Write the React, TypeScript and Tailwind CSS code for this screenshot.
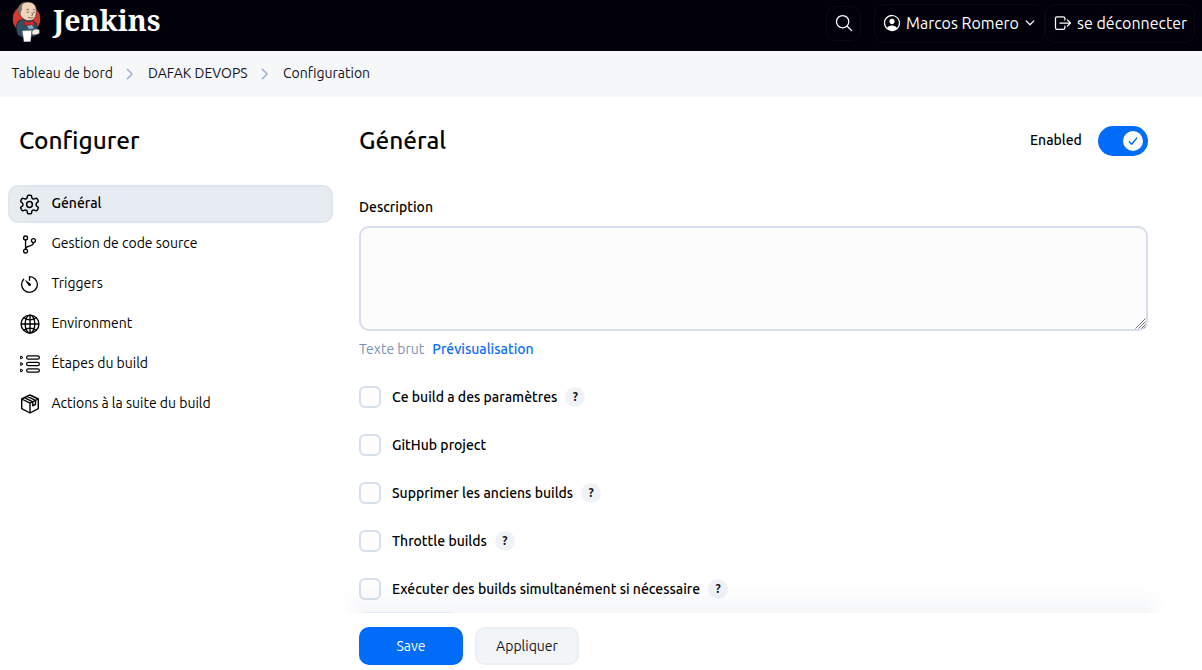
import { IoSearchOutline, IoPersonCircleOutline, IoLogOutOutline, IoGitBranchOutline, IoTimerOutline, IoGlobeOutline } from "react-icons/io5";
import type { ReactNode } from "react";

function Mascot() {
  return (
    <svg viewBox="0 0 30 42" className="h-[42px] w-[30px] shrink-0">
      <ellipse cx="14.500" cy="19" rx="13.800" ry="14" fill="#d33833" />
      <path d="M4 27 6 21.500l6-2.500 8 1 4.500 3.500 1 8-3 5-13 .500-4-2.500Z" fill="#335061" stroke="#14212b" strokeWidth=".8" />
      <path d="M6.500 12C5 6 9.500 2 15.500 2 21 2 24.500 5 24.300 10.500c.3 4.500-1 8-3.800 9.500-3.500 1.300-8.500.5-10.500-2.500-1-1-2.500-3-3.500-5.500Z" fill="#eed5b9" stroke="#3b302b" strokeWidth=".7" />
      <path d="M6.500 12C5.500 7 8.500 3.500 12.500 2.500c-2.500 2-3 4-2.500 7L8.800 12l.4 3.500Z" fill="#77716b" />
      <path d="m14.500 9.800 2.500-.6m4 .1 1.800.5m-8 2.500 2.300-.4m4 .4h1.800m-3 .3 1 2.300-1.600.6m-3.300 1.800c2 .8 3.300.8 4.800 0" stroke="#5a463c" strokeWidth=".8" fill="none" />
      <path d="m12 21 5 1.500 4.500-1.700.5 5.200-4.500-1.500-4.500 1.500Z" fill="#e3262c" stroke="#6d1718" strokeWidth=".5" />
      <path d="m15 26 5-1 2 3.500-5 .5Z" fill="#81b0c4" />
      <path d="M10.500 31 19.500 30.500l-1 11-6.500.3Z" fill="#fff" stroke="#b8bec6" strokeWidth=".4" />
      <path d="M20 31.500c1.500-3 5.500-3 7.500-1.500v3.500l-4 1.500-3.500-.5Z" fill="#f3ebe4" stroke="#3b302b" strokeWidth=".5" />
    </svg>
  );
}

function Gear() {
  return (
    <svg viewBox="0 0 24 24" className="mr-[1px] size-[21px] shrink-0" fill="none" stroke="currentColor" strokeWidth="1.700" strokeLinejoin="round">
      <path d="M9.600 2.500c.1-.7.700-1.200 1.400-1.200h2c.7 0 1.300.5 1.400 1.200l.3 1.700c.1.600.5 1 1 1.300.6.300 1.200.3 1.700.1l1.600-.6c.7-.3 1.400 0 1.800.6l1 1.800c.4.600.2 1.400-.3 1.800l-1.400 1.100c-.4.400-.6.900-.6 1.700s.2 1.300.6 1.700l1.400 1.100c.5.400.7 1.200.3 1.800l-1 1.800c-.4.600-1.100.9-1.800.6l-1.600-.6c-.5-.2-1.100-.2-1.700.1-.5.300-.9.700-1 1.300l-.3 1.700c-.1.700-.7 1.200-1.400 1.200h-2c-.7 0-1.300-.5-1.400-1.200l-.3-1.700c-.1-.6-.5-1-1-1.300-.6-.3-1.200-.3-1.700-.1l-1.600.6c-.7.300-1.400 0-1.800-.6l-1-1.800c-.4-.6-.2-1.400.3-1.800l1.400-1.100c.4-.4.600-.9.600-1.700s-.2-1.300-.6-1.700L2.500 9.200c-.5-.4-.7-1.200-.3-1.800l1-1.800c.4-.6 1.100-.9 1.800-.6l1.600.6c.5.200 1.100.2 1.700-.1.500-.3.900-.7 1-1.300Z" />
      <circle cx="12" cy="12" r="3.300" />
    </svg>
  );
}

function Steps() {
  return (
    <svg viewBox="0 0 20 20" className="size-[20px]" fill="none" stroke="currentColor" strokeWidth="1.200">
      {[3.500, 10, 16.500].map((y) => (
        <g key={y}>
          <rect x="6.600" y={y - 1.700} width="12.800" height="3.400" rx="1.700" />
          <path d={`M.7 ${y - 1.500}v3L3 ${y}Z`} strokeWidth="1" strokeLinejoin="round" />
        </g>
      ))}
    </svg>
  );
}

function Package() {
  return (
    <svg viewBox="0 0 20 20" className="size-[20px]" fill="none" stroke="currentColor" strokeWidth="1.400" strokeLinejoin="round">
      <path d="m10 1 8.300 4v9.600L10 19l-8.300-4.400V5Zm0 18V9.200M1.700 5 10 9.200 18.300 5M4.500 3.600 12.800 7.800v4l2.700-1.500v-4L7.200 2.300" />
    </svg>
  );
}

function Chevron({ className }: { className: string }) {
  return (
    <svg viewBox="0 0 12 12" className={className} fill="none" stroke="currentColor" strokeWidth="1.500" strokeLinecap="round" strokeLinejoin="round">
      <path d="m3.500 1.400 4.600 4.600-4.600 4.600" />
    </svg>
  );
}

const menu: { label: string; icon: ReactNode }[] = [
  { label: "Général", icon: <Gear /> },
  { label: "Gestion de code source", icon: <IoGitBranchOutline className="mr-[1px] size-[21px] shrink-0" /> },
  { label: "Triggers", icon: <IoTimerOutline className="mr-[1px] size-[21px] shrink-0" /> },
  { label: "Environment", icon: <IoGlobeOutline className="size-[22px]" /> },
  { label: "Étapes du build", icon: <Steps /> },
  { label: "Actions à la suite du build", icon: <Package /> },
];

const options = [
  { label: "Ce build a des paramètres", help: true },
  { label: "GitHub project", help: false },
  { label: "Supprimer les anciens builds", help: true },
  { label: "Throttle builds", help: true },
  { label: "Exécuter des builds simultanément si nécessaire", help: true },
];

export default function App() {
  return (
    <div className="flex h-[670px] w-[1202px] flex-col overflow-hidden bg-white font-['Ubuntu','Noto_Sans',sans-serif] text-[14px] leading-[20px] text-[#14141f]">
      <header className="flex h-[51px] shrink-0 items-start bg-[#02000a] pl-[12px] text-white">
        <div className="flex"><Mascot /></div>
        <span className="ml-[11px] font-['Noto_Serif','DejaVu_Serif_Condensed','DejaVu_Serif',serif] text-[28.500px] leading-[40px] font-bold">Jenkins</span>
        <nav className="ml-auto flex h-[46px] items-center pr-[7px] text-[16px]">
          <div className="mr-[13px] flex size-[35px] items-center justify-center rounded-[10px] border border-[#0b0913]"><IoSearchOutline className="size-[20px]" /></div>
          <div className="flex h-[39px] w-[171px] items-center rounded-[10px] border border-[#0b0913] pl-[7px]">
            <IoPersonCircleOutline className="size-[20px]" />
            <span className="ml-[4px] w-[115px] whitespace-nowrap">Marcos Romero</span>
            <Chevron className="ml-[4px] size-[10px] rotate-90" />
          </div>
          <div className="flex h-[39px] w-[150px] items-center rounded-[10px] border border-[#0b0913] pl-[7px]">
            <IoLogOutOutline className="size-[20px]" />
            <span className="ml-[4px] whitespace-nowrap">se déconnecter</span>
          </div>
        </nav>
      </header>
      <div className="flex h-[46px] shrink-0 items-center bg-[#f6f7f9] pb-[2px] pl-[11.500px] whitespace-nowrap">
        <span className="w-[112.500px]">Tableau de bord</span>
        <Chevron className="mt-[2px] mr-[12px] size-[12px] text-[#9fb3d0]" />
        <span className="w-[111px]">DAFAK DEVOPS</span>
        <Chevron className="mt-[2px] mr-[12px] size-[12px] text-[#9fb3d0]" />
        <span>Configuration</span>
      </div>
      <div className="flex min-h-0 flex-1">
        <aside className="w-[333px] shrink-0 pl-[8px]">
          <h1 className="mt-[27px] pl-[11px] text-[24.400px] leading-[32px] font-medium text-black">Configurer</h1>
          <ul className="mt-[29px] flex flex-col gap-[2px]">
            {menu.map((m, i) => (
              <li key={m.label} className={`flex h-[38px] items-center rounded-[10px] border-2 pl-[9px] text-black ${i === 0 ? "border-[#e0e6ee] bg-[#e7ebf2] font-medium" : "border-transparent"}`}>
                <span className="flex w-[22px] items-center justify-center">{m.icon}</span>
                <span className="ml-[10.500px] pb-[2px] whitespace-nowrap">{m.label}</span>
              </li>
            ))}
          </ul>
        </aside>
        <main className="ml-[26px] flex w-[789px] flex-col">
          <div className="mt-[27px] flex h-[34px] shrink-0 items-center">
            <h2 className="pb-[2px] text-[24.400px] leading-[32px] font-medium text-black">Général</h2>
            <span className="ml-auto w-[68px] pb-[2px] font-medium text-black">Enabled</span>
            <span className="flex h-[30px] w-[50px] items-center justify-end rounded-full bg-[#006cf8] pr-[5px]">
              <span className="flex size-[20px] items-center justify-center rounded-full bg-white text-[#006cf8]">
                <svg viewBox="0 0 12 12" className="size-[12px]" fill="none" stroke="currentColor" strokeWidth="1.400" strokeLinecap="round" strokeLinejoin="round"><path d="m2.300 6.800 2.400 2.500 5-6.200" /></svg>
              </span>
            </span>
          </div>
          <label className="mt-[39px] font-medium text-black">Description</label>
          <div className="relative mt-[9px] h-[105px] shrink-0">
            <textarea className="block h-[105px] w-full resize-none rounded-[10px] border-2 border-[#d6dfeb] bg-[#fcfcfd] outline-none" />
            <svg viewBox="0 0 11 11" className="absolute right-[2px] bottom-[2px] size-[11px]" stroke="#777" strokeWidth="1">
              <path d="M.5 10.500 10.500.500M3.500 10.500l7-7M6.500 10.500l4-4M9 10.500 10.500 9" />
            </svg>
          </div>
          <div className="mt-[8px] flex whitespace-nowrap">
            <span className="w-[73.300px] text-[#7c92b5]">Texte brut</span>
            <span className="font-medium text-[#0b6cf5]">Prévisualisation</span>
          </div>
          <div className="mt-[24px] flex h-[230px] shrink-0 flex-col gap-[20px]">
            {options.map((o) => (
              <div key={o.label} className="flex h-[28px] shrink-0 items-center">
                <span className="size-[22px] shrink-0 rounded-[6px] border-2 border-[#d6dfeb] bg-[#fdfdfe]" />
                <span className="ml-[11px] pb-[1px] font-medium whitespace-nowrap text-black">{o.label}</span>
                {o.help && <span className="ml-[8px] flex size-[20px] items-center justify-center rounded-full bg-[#eff3f8] text-[12px] font-bold">?</span>}
              </div>
            ))}
          </div>
          <footer className="relative flex shrink-0 gap-[12px] pt-[14px]">
            <div className="pointer-events-none absolute top-[-30px] left-[-20px] h-[30px] w-[829px] bg-linear-to-b from-transparent to-[#5a6f960f] mask-x-from-97% mask-x-to-100%" />
            <div className="absolute top-[-1px] left-[6px] h-px w-[86px] bg-[#e6e8f5]" />
            <button className="relative h-[38px] w-[104px] rounded-[10px] bg-[#006cf8] text-white">Save</button>
            <button className="relative h-[38px] w-[104px] rounded-[10px] border-2 border-[#eaeff4] bg-[#f2f5f8]">Appliquer</button>
          </footer>
        </main>
      </div>
    </div>
  );
}
